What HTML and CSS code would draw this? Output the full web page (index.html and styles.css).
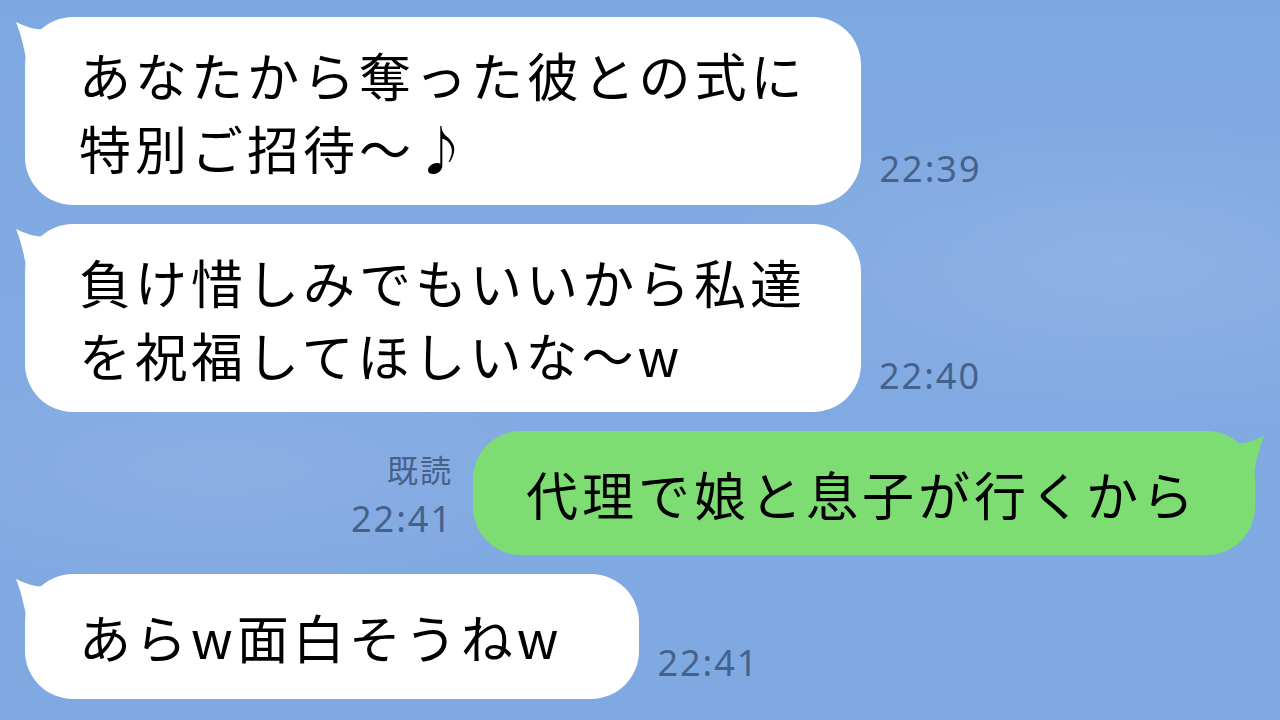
FILE: index.html
```html
<!DOCTYPE html>
<html lang="ja">
<head>
    <meta charset="UTF-8">
    <meta name="viewport" content="width=device-width, initial-scale=1.0">
    <title>トーク</title>
    <link rel="stylesheet" href="styles.css">
</head>
<body>

<div class="chat">

    <!-- incoming -->
    <div class="row row-in">
        <div class="bubble bubble-in">
            <svg class="tail tail-in" width="44" height="50" viewBox="0 0 44 50"><path d="M3 5 Q22 15 40 12 L44 44 L14 48 Q10 22 3 5 Z"/></svg>
            あなたから奪った彼との式に<br>特別ご招待〜♪
        </div>
        <div class="meta"><span class="time">22:39</span></div>
    </div>

    <div class="row row-in">
        <div class="bubble bubble-in">
            <svg class="tail tail-in" width="44" height="50" viewBox="0 0 44 50"><path d="M3 5 Q22 15 40 12 L44 44 L14 48 Q10 22 3 5 Z"/></svg>
            負け惜しみでもいいから私達<br>を祝福してほしいな〜w
        </div>
        <div class="meta"><span class="time">22:40</span></div>
    </div>

    <!-- outgoing -->
    <div class="row row-out">
        <div class="meta meta-out">
            <span class="read">既読</span>
            <span class="time">22:41</span>
        </div>
        <div class="bubble bubble-out">
            <svg class="tail tail-out" width="44" height="50" viewBox="0 0 44 50"><path d="M41 5 Q22 15 4 12 L0 44 L30 48 Q34 22 41 5 Z"/></svg>
            代理で娘と息子が行くから
        </div>
    </div>

    <div class="row row-in">
        <div class="bubble bubble-in bubble-short">
            <svg class="tail tail-in" width="44" height="50" viewBox="0 0 44 50"><path d="M3 5 Q22 15 40 12 L44 44 L14 48 Q10 22 3 5 Z"/></svg>
            あらw面白そうねw
        </div>
        <div class="meta"><span class="time">22:41</span></div>
    </div>

</div>

</body>
</html>
```

FILE: styles.css
```css
/* Talk screen background */
body {
    margin: 0;
    width: 1280px;
    height: 720px;
    overflow: hidden;
    font-family: "Noto Sans CJK JP", "Noto Sans", sans-serif;
    color: #000;
    background:
        radial-gradient(ellipse 420px 160px at 1120px 260px, rgba(255, 255, 255, 0.10), transparent),
        radial-gradient(ellipse 380px 120px at 220px 470px, rgba(255, 255, 255, 0.07), transparent),
        linear-gradient(180deg, #7ea8e1 0%, #82aae2 50%, #80a9e1 100%);
}

.chat {
    display: flex;
    flex-direction: column;
    gap: 19px;
    padding: 17px 25px 0 25px;
}

.row {
    display: flex;
    align-items: flex-end;
}

.row-out {
    justify-content: flex-end;
}

/* Bubbles */
.bubble {
    position: relative;
    box-sizing: border-box;
    min-height: 124px;
    display: flex;
    align-items: center;
    padding: 21px 55px 21px 54px;
    border-radius: 48px;
    font-size: 52px;
    line-height: 73px;
    letter-spacing: 4px;
    white-space: nowrap;
}

.bubble-in {
    background: #fff;
}

.bubble-short {
    padding-right: 77px;
    min-height: 125px;
}

.bubble-out {
    background: #7ddd72;
    padding: 21px 57px 21px 53px;
}

.tail {
    position: absolute;
    top: 0;
}

.tail-in {
    left: -12px;
    fill: #fff;
}

.tail-out {
    right: -12px;
    fill: #7ddd72;
}

/* Read mark and time */
.meta {
    display: flex;
    flex-direction: column;
    padding: 0 0 14px 18px;
    color: #46618b;
}

.meta-out {
    align-items: flex-end;
    padding: 0 20px 14px 0;
}

.time {
    font-family: "Noto Sans", sans-serif;
    font-size: 36px;
    line-height: 44px;
    letter-spacing: 2px;
}

.read {
    font-size: 31px;
    line-height: 40px;
    letter-spacing: 2px;
    margin-bottom: 8px;
}
```
